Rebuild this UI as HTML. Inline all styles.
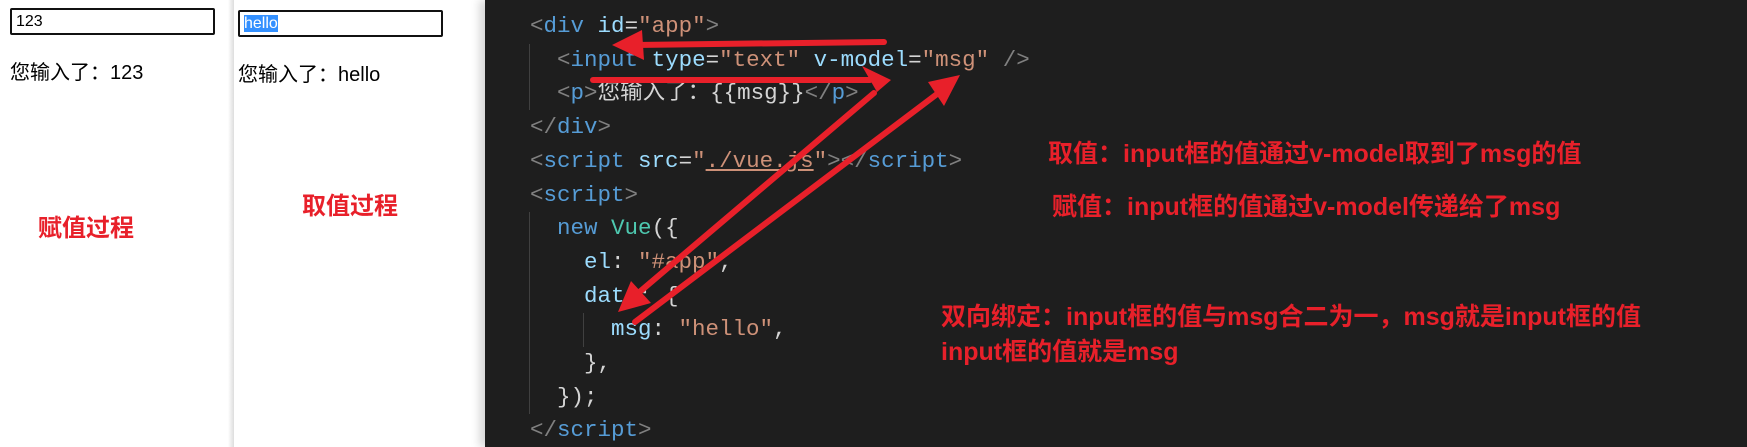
<!DOCTYPE html>
<html><head><meta charset="utf-8">
<style>
html,body{margin:0;padding:0;width:1747px;height:447px;overflow:hidden;background:#fff;position:relative;font-family:"Liberation Sans","Noto Sans CJK SC",sans-serif}
.abs{position:absolute}
.inp{position:absolute;border:2px solid #111;border-radius:2px;background:#fff;box-sizing:border-box;height:27px;font:16px "Liberation Sans",sans-serif;padding:2px 4px;line-height:19px}
.p{position:absolute;font-size:20px;color:#000;white-space:nowrap}
.red{color:#e8202a;font-weight:bold;white-space:nowrap;position:absolute}
#ed{position:absolute;left:485px;top:0;width:1262px;height:447px;background:#1e1e1e;box-shadow:-6px 0 8px rgba(0,0,0,0.15)}
#code{position:absolute;left:530px;top:10px;font:22.5px/33.7px "Liberation Mono","Noto Sans CJK SC",monospace;color:#d4d4d4;white-space:pre;margin:0}
.g{color:#808080}.t{color:#569cd6}.a{color:#9cdcfe}.s{color:#ce9178}.c{color:#4ec9b0}
.guide{position:absolute;width:1px;background:#404040}
</style></head><body>
<div class="abs" style="left:228px;top:0;width:6px;height:447px;background:linear-gradient(to right,#fff,#ddd)"></div>
<div class="inp" style="left:10px;top:8px;width:205px">123</div>
<div class="p" style="left:10px;top:56px">您输入了：123</div>
<div class="inp" style="left:238px;top:10px;width:205px"><span style="background:#3390ff;color:#fff">hello</span></div>
<div class="p" style="left:238px;top:58px">您输入了：hello</div>
<div class="red" style="left:38px;top:208px;font-size:24px">赋值过程</div>
<div class="red" style="left:302px;top:186px;font-size:24px">取值过程</div>
<div id="ed"></div>
<div class="guide" style="left:529px;top:44px;height:66px"></div>
<div class="guide" style="left:529px;top:212px;height:202px"></div>
<div class="guide" style="left:583px;top:313px;height:34px"></div>
<pre id="code"><span class="g">&lt;</span><span class="t">div</span> <span class="a">id</span>=<span class="s">"app"</span><span class="g">&gt;</span>
  <span class="g">&lt;</span><span class="t">input</span> <span class="a">type</span>=<span class="s">"text"</span> <span class="a">v-model</span>=<span class="s">"msg"</span> <span class="g">/&gt;</span>
  <span class="g">&lt;</span><span class="t">p</span><span class="g">&gt;</span>您输入了：{{msg}}<span class="g">&lt;/</span><span class="t">p</span><span class="g">&gt;</span>
<span class="g">&lt;/</span><span class="t">div</span><span class="g">&gt;</span>
<span class="g">&lt;</span><span class="t">script</span> <span class="a">src</span>=<span class="s">"<u>./vue.js</u>"</span><span class="g">&gt;&lt;/</span><span class="t">script</span><span class="g">&gt;</span>
<span class="g">&lt;</span><span class="t">script</span><span class="g">&gt;</span>
  <span class="t">new</span> <span class="c">Vue</span>({
    <span class="a">el</span>: <span class="s">"#app"</span>,
    <span class="a">data</span>: {
      <span class="a">msg</span>: <span class="s">"hello"</span>,
    },
  });
<span class="g">&lt;/</span><span class="t">script</span><span class="g">&gt;</span></pre>
<div class="red" style="left:1048px;top:134px;font-size:25px">取值：input框的值通过v-model取到了msg的值</div>
<div class="red" style="left:1052px;top:187px;font-size:25px">赋值：input框的值通过v-model传递给了msg</div>
<div class="red" style="left:941px;top:297px;font-size:25px">双向绑定：input框的值与msg合二为一，msg就是input框的值</div>
<div class="red" style="left:941px;top:332px;font-size:25px">input框的值就是msg</div>
<svg class="abs" style="left:0;top:0" width="1747" height="447">
<g stroke="#e8202a" stroke-width="6" stroke-linecap="round" fill="#e8202a">
<line x1="884" y1="42" x2="630" y2="45"/>
<line x1="593" y1="80" x2="870" y2="80"/>
<line x1="874" y1="93" x2="630" y2="300"/>
<line x1="635" y1="322" x2="945" y2="88"/>
</g>
<g fill="#e8202a">
<polygon points="612,45 642,30 644,60"/>
<polygon points="891,80 862,66 877,92"/>
<polygon points="618,312 631,281 651,303"/>
<polygon points="960,75 928,82 944,106"/>
</g>
</svg>
</body></html>
